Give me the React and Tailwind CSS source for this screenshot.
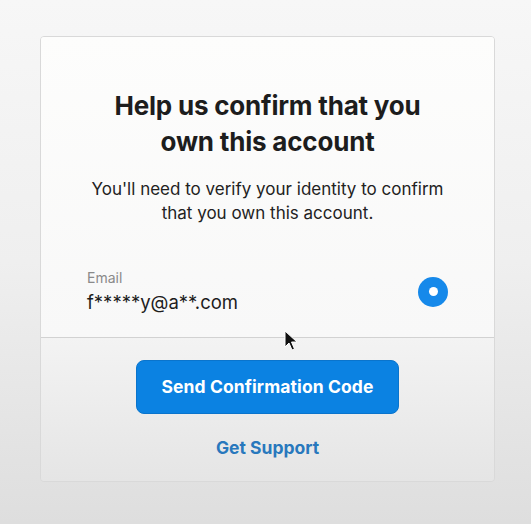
import { useState } from 'react'

function Cursor() {
  return (
    <svg
      className="absolute left-[284px] top-[330px] pointer-events-none"
      width="14"
      height="22"
      viewBox="0 0 14 22"
    >
      <path
        d="M1 1 L1 17 L5 13 L8 20 L10.5 19 L7.5 12 L13 12 Z"
        fill="#111"
        stroke="#fff"
        strokeWidth="1"
        strokeLinejoin="round"
      />
    </svg>
  )
}

export default function App() {
  const [selected] = useState(true)

  return (
    <div
      className="relative min-h-screen w-full bg-gradient-to-b from-[#f7f7f7] via-[#efefef] to-[#dedede] pt-[36px] pl-[40px]"
      style={{ fontFamily: 'Inter, "Noto Sans", sans-serif' }}
    >
      <div className="w-[455px] h-[446px] flex flex-col rounded-[4px] border border-[#d9d9d9] overflow-hidden">
        {/* Top: heading, message, email option */}
        <div className="h-[301px] flex flex-col bg-gradient-to-b from-[#fdfdfc] to-[#f8f8f8] border-b border-[#d2d2d2] pt-[51px]">
          <h1 className="text-center text-[26px] leading-[36px] font-bold text-[#1d1d1d] tracking-[-0.2px]">
            Help us confirm that you
            <br />
            own this account
          </h1>
          <p className="mt-[17px] text-center text-[17px] leading-[24px] text-[#222]">
            You'll need to verify your identity to confirm
            <br />
            that you own this account.
          </p>

          <div className="mt-[44px] flex items-center justify-between pl-[46px] pr-[46px]">
            <div className="flex flex-col">
              <span className="text-[14px] leading-[18px] text-[#8a8a8a]">Email</span>
              <span className="text-[18.5px] leading-[24px] text-[#1d1d1d] mt-[3px]">f*****y@a**.com</span>
            </div>
            <div
              className={`w-[30px] h-[30px] rounded-full flex items-center justify-center ${
                selected ? 'bg-[#1689ea]' : 'border border-gray-300'
              }`}
            >
              <div className="w-[9px] h-[9px] rounded-full bg-white" />
            </div>
          </div>
        </div>

        {/* Bottom: actions */}
        <div className="flex-1 flex flex-col items-center bg-gradient-to-b from-[#f3f3f3] to-[#e5e5e5] pt-[22px]">
          <button className="w-[263px] h-[54px] rounded-[8px] bg-[#0b82e2] border border-[#0a74cc] text-white text-[17.5px] font-bold tracking-[0.1px]">
            Send Confirmation Code
          </button>
          <button className="mt-[22px] text-[17.5px] leading-[24px] font-bold text-[#2878bd]">
            Get Support
          </button>
        </div>
      </div>
      <Cursor />
    </div>
  )
}
